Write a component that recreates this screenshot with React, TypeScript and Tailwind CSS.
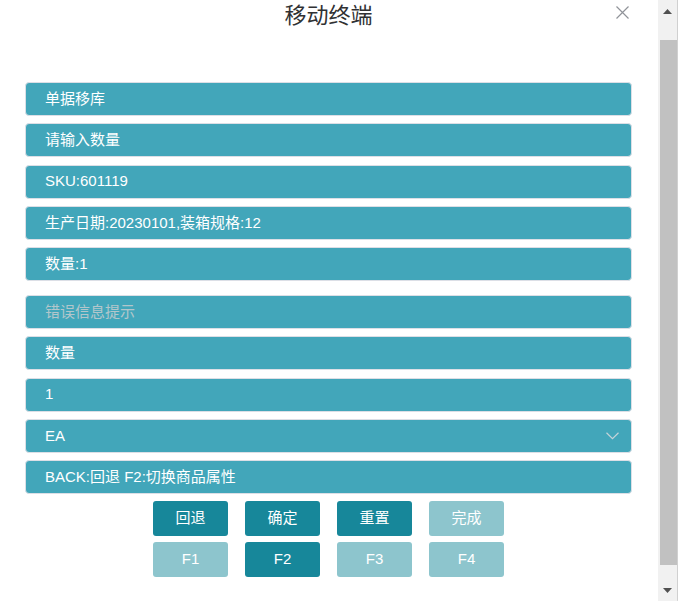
import React from 'react';

const rows = [
  { text: '单据移库' },
  { text: '请输入数量' },
  { text: 'SKU:601119' },
  { text: '生产日期:20230101,装箱规格:12' },
  { text: '数量:1' },
];

const rows2 = [
  { text: '错误信息提示', placeholder: true },
  { text: '数量' },
  { text: '1' },
  { text: 'EA', select: true },
  { text: 'BACK:回退 F2:切换商品属性' },
];

const buttons = [
  { label: '回退', active: true },
  { label: '确定', active: true },
  { label: '重置', active: true },
  { label: '完成', active: false },
  { label: 'F1', active: false },
  { label: 'F2', active: true },
  { label: 'F3', active: false },
  { label: 'F4', active: false },
];

const Row = ({ text, placeholder, select }: { text: string; placeholder?: boolean; select?: boolean }) => (
  <div className="h-[34px] flex items-center justify-between rounded-[4px] border border-[#dcdfe6] bg-[#42a6ba] pl-[19px] pr-[12px]">
    <span className={placeholder ? 'text-[15px] text-[#b3c6cb]' : 'text-[15px] text-white'}>{text}</span>
    {select && (
      <svg width="13" height="8" viewBox="0 0 13 8" fill="none">
        <path d="M0.5 0.8 L6.5 6.6 L12.5 0.8" stroke="#c5d3d8" strokeWidth="1.2" />
      </svg>
    )}
  </div>
);

export default function App() {
  return (
    <div
      className="w-[679px] h-[601px] flex bg-white overflow-hidden"
      style={{ fontFamily: '"Liberation Sans", "Noto Sans CJK SC", sans-serif' }}
    >
      <div className="flex-1 flex flex-col px-[25px] pr-[26px]">
        <div className="relative h-[82px]">
          <div className="text-center text-[22px] leading-[32px] text-[#303133]">移动终端</div>
          <svg className="absolute right-[3px] top-[6px]" width="13" height="13" viewBox="0 0 13 13">
            <path d="M0.5 0.5 L12.5 12.5 M12.5 0.5 L0.5 12.5" stroke="#909399" strokeWidth="1.2" />
          </svg>
        </div>
        <div className="flex flex-col gap-[7.25px]">
          {rows.map((r) => (
            <Row key={r.text} text={r.text} />
          ))}
        </div>
        <div className="flex flex-col gap-[7.25px] mt-[14px]">
          {rows2.map((r) => (
            <Row key={r.text} text={r.text} placeholder={r.placeholder} select={r.select} />
          ))}
        </div>
        <div className="grid grid-cols-[repeat(4,75px)] gap-x-[17px] gap-y-[6px] justify-center mt-[7px]">
          {buttons.map((b) => (
            <div
              key={b.label}
              className={
                b.active
                  ? 'h-[35px] flex items-center justify-center rounded-[3px] bg-[#17879a] text-white text-[15px]'
                  : 'h-[35px] flex items-center justify-center rounded-[3px] bg-[#8dc5cd] text-white text-[15px]'
              }
            >
              {b.label}
            </div>
          ))}
        </div>
      </div>
      {/* scrollbar */}
      <div className="w-[19px] bg-[#f1f1f1] flex flex-col items-end">
        <div className="h-[40px] w-full flex items-start justify-center pt-[9px]">
          <svg width="9" height="5" viewBox="0 0 9 5">
            <path d="M0 5 L4.5 0 L9 5 Z" fill="#505050" />
          </svg>
        </div>
        <div className="w-[17px] h-[525px] bg-[#c1c1c1]" />
        <div className="flex-1 w-full flex items-end justify-center pb-[8px]">
          <svg width="9" height="5" viewBox="0 0 9 5">
            <path d="M0 0 L9 0 L4.5 5 Z" fill="#505050" />
          </svg>
        </div>
      </div>
      <div className="w-[2px] bg-white border-l border-[#d0d0d0] rounded-br-[4px]" />
    </div>
  );
}
